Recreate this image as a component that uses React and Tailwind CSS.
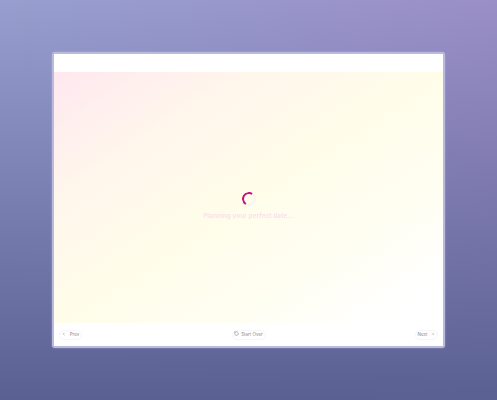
import React from "react";

const App = () => {
  return (
    <div className="h-[400px] w-[497px] flex items-center justify-center bg-[linear-gradient(180deg,transparent_0%,#5a6092_100%),linear-gradient(90deg,#979fcf_0%,#9b8fc8_100%)] font-['Inter',sans-serif]">
      <div className="w-[393px] h-[296px] flex flex-col bg-white rounded-[3px] border-2 border-[#b8bade] shadow-[0_0_2px_rgba(200,200,235,0.6)] overflow-hidden">
        {/* Top bar */}
        <div className="h-[18px] bg-white shrink-0" />

        {/* Loading area */}
        <div className="flex-1 flex flex-col items-center pt-[120px] bg-[linear-gradient(to_bottom_right,#ffe8f0_0%,#fff6ec_25%,#fffdea_50%,#fffef2_72%,#ffffff_92%)]">
          <div className="w-[14px] h-[14px] rounded-full border-2 border-[#f7f4f0] border-t-[#c80f80] border-l-[#c80f80] -rotate-[12deg]" />
          <p className="mt-[5px] text-[6.5px] leading-[10px] font-bold text-[#fbe0ee] blur-[0.2px]">
            Planning your perfect date...
          </p>
        </div>

        {/* Footer */}
        <div className="h-[23px] shrink-0 bg-white flex items-center justify-between px-[5px] text-[4.5px] leading-none text-[#8a8a8a]">
          <button className="h-[10px] w-[23px] flex items-center justify-center gap-[4px] rounded-full border border-[#f6f6f6]">
            <svg className="block mb-[2px]" width="4" height="4" viewBox="0 0 24 24" fill="none" stroke="#777" strokeWidth="3"><path d="M15 5l-7 7 7 7" /></svg>
            <span className="block mt-[2px]">Prev</span>
          </button>
          <button className="h-[10px] w-[34px] flex items-center justify-center gap-[2px] rounded-full border border-[#f6f6f6]">
            <svg className="block mb-[2px]" width="5" height="5" viewBox="0 0 24 24" fill="none" stroke="#777" strokeWidth="2.5"><path d="M3 12a9 9 0 1 0 3-6.7L3 8" /><path d="M3 3v5h5" /></svg>
            <span className="block mt-[2px]">Start Over</span>
          </button>
          <button className="h-[10px] w-[23px] flex items-center justify-center gap-[4px] rounded-full border border-[#f6f6f6]">
            <span className="block mt-[2px]">Next</span>
            <svg className="block mb-[2px]" width="4" height="4" viewBox="0 0 24 24" fill="none" stroke="#777" strokeWidth="3"><path d="M9 5l7 7-7 7" /></svg>
          </button>
        </div>
      </div>
    </div>
  );
};

export default App;
